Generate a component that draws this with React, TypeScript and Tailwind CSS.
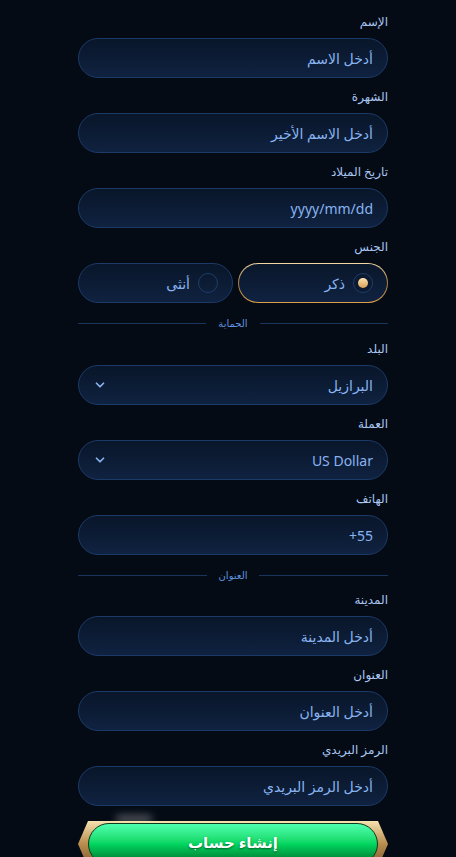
import { ChevronDown } from "lucide-react";

const font = { fontFamily: '"Noto Sans", "DejaVu Sans", sans-serif' };

function Label({ text }: { text: string }) {
  return <div className="h-[18px] text-[12px] leading-[20px] text-[#a9c6f2]">{text}</div>;
}

function Input({ value, select, ltr }: { value: string; select?: boolean; ltr?: boolean }) {
  return (
    <div className="flex h-10 items-center justify-between rounded-full border border-[#1b3a68] bg-gradient-to-b from-[#09162a] to-[#0f2240] pr-[14px] pl-[14px]">
      <span dir={ltr ? "ltr" : undefined} className="text-[14px] text-[#89b3f0]">
        {value}
      </span>
      {select && <ChevronDown className="h-3.5 w-3.5 text-[#89b3f0]" strokeWidth={3} />}
    </div>
  );
}

function Field({ label, value, select, ltr }: { label: string; value: string; select?: boolean; ltr?: boolean }) {
  return (
    <div className="flex flex-col gap-[8px]">
      <Label text={label} />
      <Input value={value} select={select} ltr={ltr} />
    </div>
  );
}

function Divider({ text }: { text: string }) {
  return (
    <div className="flex h-[14px] items-center gap-3">
      <div className="h-px flex-1 bg-[#1a355c]" />
      <span className="text-[10px] leading-[14px] text-[#5f92de]">{text}</span>
      <div className="h-px flex-1 bg-[#1a355c]" />
    </div>
  );
}

function Gender() {
  return (
    <div className="flex flex-col gap-[8px]">
      <Label text="الجنس" />
      <div className="flex gap-[5px]">
        <div className="w-[150px] rounded-full bg-gradient-to-b from-[#f3d9a4] via-[#a57d45] to-[#e0a04a] p-px">
          <div className="flex h-[38px] items-center gap-[8px] rounded-full bg-gradient-to-b from-[#0a172b] to-[#0f2240] pr-[14px]">
            <span className="flex h-5 w-5 items-center justify-center rounded-full border border-[#1f3d68] bg-[#0b1a30]">
              <span className="h-[10px] w-[10px] rounded-full bg-gradient-to-b from-[#fbe3b0] to-[#d9a256]" />
            </span>
            <span className="text-[14px] text-[#89b3f0]">ذكر</span>
          </div>
        </div>
        <div className="flex h-10 flex-1 items-center gap-[8px] rounded-full border border-[#1b3a68] bg-gradient-to-b from-[#09162a] to-[#0f2240] pr-[14px]">
          <span className="h-5 w-5 rounded-full border border-[#1f3d68]" />
          <span className="text-[14px] text-[#89b3f0]">أنثى</span>
        </div>
      </div>
    </div>
  );
}

function SubmitButton() {
  return (
    <div className="relative">
      <div className="absolute -top-[5px] left-[38px] h-[6px] w-[36px] rounded-full bg-white/40 blur-[4px]" />
      <div className="h-[46px] bg-gradient-to-b from-[#f6e2b0] via-[#b98c4e] to-[#7a5a2e] p-[2px] [clip-path:polygon(10px_0,calc(100%-10px)_0,100%_50%,calc(100%-10px)_100%,10px_100%,0_50%)]">
        <div className="flex h-full items-center justify-center px-[8px]">
          <div className="flex h-full w-full items-center justify-center rounded-full border border-[#0b3a1c] bg-gradient-to-b from-[#4dffb0] via-[#00d65f] to-[#006f2a]">
            <span className="-mt-[4px] text-[15px] font-bold text-white [text-shadow:0_1px_2px_rgba(0,0,0,0.5)]">
              إنشاء حساب
            </span>
          </div>
        </div>
      </div>
    </div>
  );
}

export default function App() {
  return (
    <div dir="rtl" style={font} className="h-[857px] overflow-hidden bg-[#050b15]">
      <div className="mr-[68px] ml-[78px] flex flex-col pt-[12px]">
        <div className="flex flex-col gap-[9px]">
          <Field label="الإسم" value="أدخل الاسم" />
          <Field label="الشهرة" value="أدخل الاسم الأخير" />
          <Field label="تاريخ الميلاد" value="yyyy/mm/dd" />
          <Gender />
        </div>
        <div className="pt-[13px] pb-[9px]">
          <Divider text="الحماية" />
        </div>
        <div className="flex flex-col gap-[9px]">
          <Field label="البلد" value="البرازيل" select />
          <Field label="العملة" value="US Dollar" select />
          <Field label="الهاتف" value="+55" ltr />
        </div>
        <div className="pt-[13px] pb-[8px]">
          <Divider text="العنوان" />
        </div>
        <div className="flex flex-col gap-[9px]">
          <Field label="المدينة" value="أدخل المدينة" />
          <Field label="العنوان" value="أدخل العنوان" />
          <Field label="الرمز البريدي" value="أدخل الرمز البريدي" />
        </div>
        <div className="pt-[15px]">
          <SubmitButton />
        </div>
      </div>
    </div>
  );
}
